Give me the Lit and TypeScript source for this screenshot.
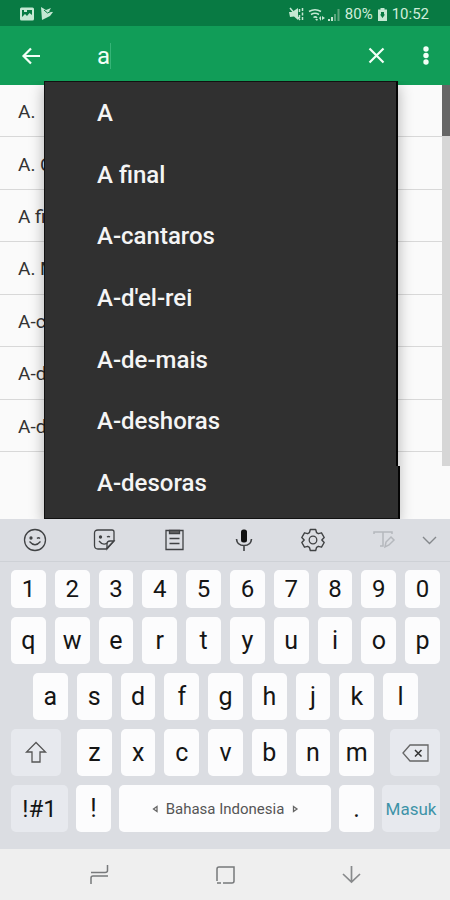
import { LitElement, html, css, svg } from "lit";
import { customElement, property, state } from "lit/decorators.js";

const suggestions = ["A", "A final", "A-cantaros", "A-d'el-rei", "A-de-mais", "A-deshoras", "A-desoras"];
const entries = ["A.", "A. C.", "A final", "A. M.", "A-cantaros", "A-d'el-rei", "A-de-mais"];

const glyphs: Record<string, unknown> = {
  picture: svg`<path d="M1.500 .5h11q1.500 0 1.500 1.500v10q0 1.500-1.500 1.500h-11q-1.500 0-1.500-1.500v-10q0-1.500 1.500-1.500z" fill="#c5e8d3"/><path d="M2 3h10v5l-2.500-2-2.500 3-2-2-3 3z" fill="#087a43"/><path d="M4 3h3v2H4z" fill="#c5e8d3"/>`,
  play: svg`<path d="M0 0l5 3 5-2-2 3.500 4 .5-3 4-8 4z" fill="#c5e8d3"/><path d="M3 3l3.500 3L11 4" fill="none" stroke="#087a43" stroke-width="1"/>`,
  mute: svg`<path d="M0 5h3l6-4v12L5 9.500 1 10z" fill="#c5e8d3"/><path d="M1 1l10 12M10.500 2v3M10.500 8v3M13.500 1v3M13.500 5.500v3M13.500 10v3" stroke="#c5e8d3" stroke-width="1.500" fill="none"/>`,
  wifi: svg`<g fill="none" stroke="#c5e8d3" stroke-width="1.500"><path d="M0 3.500Q6 0 12 3.500M2 6.500Q6 4 10 6.500M4.500 9.500Q6.500 8 8 10"/></g><path d="M6 11l2 2 1-2zM10 10l2-2v5zM13 8l3 2-3 2z" fill="#c5e8d3"/>`,
  signal: svg`<path d="M0 11h2v2H0zM3 9h2v4H3z" fill="#c5e8d3"/><path d="M6 6h2v7H6zM9.500 1h2v12h-2z" fill="#5ca57d"/>`,
  battery: svg`<path d="M2.500 0h4v1.500H9V13H0V1.500h2.500z" fill="#c5e8d3"/><path d="M3 4h3v2.500h1L4.500 10 2 6.500h1z" fill="#087a43"/>`,
  back: svg`<path d="M18 9H2M9 1.500L1.500 9 9 16.500" fill="none" stroke="#f2fff6" stroke-width="2.200"/>`,
  close: svg`<path d="M1.500 1.500l14 14M15.500 1.500l-14 14" stroke="#f2fff6" stroke-width="2.200"/>`,
  more: svg`<circle cx="3" cy="3" r="2.700" fill="#f2fff6"/><circle cx="3" cy="9.500" r="2.700" fill="#f2fff6"/><circle cx="3" cy="16" r="2.700" fill="#f2fff6"/>`,
  smile: svg`<circle cx="12" cy="12" r="10.500"/><path d="M6.500 13.500q5.500 6.500 11 0M14 10.500q1.500-1.500 3 0"/><circle cx="8" cy="10" r="1" fill="#333"/>`,
  sticker: svg`<path d="M6 2h14q2 0 2 2v9l-8 8H6q-3.500 0-3.500-3.500V5Q2.500 2 6 2z"/><path d="M22 13h-4q-3 0-3 3v5zM7 13q4 5 8 2M15 9q1.500-1 3 0"/><circle cx="8.500" cy="9" r="1" fill="#333"/>`,
  clipboard: svg`<path d="M4 2.500h17v19H4z"/><path d="M7.500 2.500h10v3h-10z" fill="#666"/><path d="M7.500 10.500h10M7.500 15.500h10" stroke-width="1.600"/>`,
  mic: svg`<rect x="9" y="1.500" width="6" height="13" rx="2.500" fill="#111" stroke="none"/><path d="M4.500 11q.5 6.500 7.500 6.500t7.500-6.500M12 17.500V23" stroke-width="1.600"/>`,
  gear: svg`<path d="M9.300 1.500h5.400l.9 3.200 1.700 1 3.200-.9 2.700 4.700-2.400 2.500 2.400 2.500-2.700 4.700-3.200-.9-1.700 1-.9 3.200H9.300l-.9-3.200-1.700-1-3.200.9L.8 14.500 3.200 12 .8 9.500l2.700-4.700 3.200.9 1.700-1z" stroke-linejoin="round" stroke-width="1.400"/><circle cx="12" cy="12" r="3.800"/>`,
  handwriting: svg`<g stroke="#b5b8bd" stroke-width="1.500"><path d="M3 6V4h18v2M12 4v14H9"/><path d="M14 19l1-5 5-5 3 3-5 5z"/></g>`,
  chevron: svg`<path d="M1 1l6.500 6.500L14 1" stroke="#85888c" stroke-width="1.400"/>`,
  shift: svg`<path d="M11 1.500L1.500 11H7v10h8V11h5.500z" stroke="#555" stroke-width="1.300"/>`,
  erase: svg`<path d="M1 9l7-8h18v16H8z" stroke="#666"/><path d="M13 6l6.500 6.500M19.500 6L13 12.500" stroke="#333" stroke-width="1.500"/>`,
  recents: svg`<path d="M1 19v-6q0-2 2-2h15M1 7.500h14q2.500 0 2.500-2V0" stroke="#77797b" stroke-width="1.500"/>`,
  home: svg`<path d="M1 15V3q0-2 2-2h15v14q0 2-2 2H7M5 17H1" stroke="#77797b" stroke-width="1.500"/>`,
  down: svg`<path d="M9.500 0v16M1 8l8.500 8L18 8" stroke="#888a8c" stroke-width="1.700"/>`,
  left: svg`<path d="M5 1.500L1.500 4 5 6.500z" stroke="#666"/>`,
  right: svg`<path d="M1.500 1.500L5 4 1.500 6.500z" stroke="#666"/>`,
};

@customElement("line-icon")
export class LineIcon extends LitElement {
  @property() name = "";
  @property({ type: Number }) w = 24;
  @property({ type: Number }) h = 24;
  static styles = css`
    :host { display: inline-flex; flex: none; }
    svg { display: block; fill: none; stroke: none; overflow: visible; }
    .lined { stroke: #404244; stroke-width: 1.300; }
  `;
  render() {
    const solid = ["picture", "play", "mute", "wifi", "signal", "battery", "back", "close", "more"].includes(this.name);
    return html`<svg class=${solid ? "" : "lined"} width=${this.w} height=${this.h} viewBox="0 0 ${this.w} ${this.h}" aria-hidden="true">${glyphs[this.name]}</svg>`;
  }
}

@customElement("soft-keyboard")
export class SoftKeyboard extends LitElement {
  static styles = css`
    :host { display: block; background: #dbdde2; font-family: Roboto, sans-serif; padding-bottom: 17px; }
    button { border: 0; margin: 0; padding: 0; font: inherit; color: #151515; background: none; display: flex; align-items: center; justify-content: center; min-width: 0; }
    .tools { display: grid; grid-template-columns: repeat(5, 1fr) 1fr 24px; height: 43px; box-sizing: border-box; border-bottom: 1px solid #ced1d6; padding-right: 8px; }
    .rows { display: flex; flex-direction: column; gap: 9px; padding: 8px 10px 0 11px; }
    .row { display: flex; gap: 9px; height: 47px; font-size: 25px; }
    .numbers { height: 38px; font-size: 24px; }
    .inset { padding: 0 22px; }
    .key { flex: 1; background: #fcfcfd; border-radius: 5px; }
    .third { display: grid; grid-template-columns: 50px 1fr 50px; gap: 16px; }
    .group { display: flex; gap: 9px; }
    .last { display: grid; grid-template-columns: 57px 35px 1fr 35px 58px; column-gap: 8px; }
    .special { background: #e7e9ee; }
    .symbols { font-size: 24px; }
    .space { font-size: 15px; color: #555; gap: 8px; }
    .enter { font-size: 17px; color: #3e93a8; }
  `;
  keys(text: string) {
    return [...text].map((k) => html`<button class="key">${k}</button>`);
  }
  render() {
    const tools = [["smile", "Emoji"], ["sticker", "Stiker"], ["clipboard", "Papan klip"], ["mic", "Suara"], ["gear", "Pengaturan"], ["handwriting", "Tulisan tangan"]];
    return html`
      <div class="tools">
        ${tools.map(([n, l]) => html`<button aria-label=${l}><line-icon name=${n}></line-icon></button>`)}
        <button aria-label="Tutup"><line-icon name="chevron" w="15" h="9"></line-icon></button>
      </div>
      <div class="rows">
        <div class="row numbers">${this.keys("1234567890")}</div>
        <div class="row">${this.keys("qwertyuiop")}</div>
        <div class="row inset">${this.keys("asdfghjkl")}</div>
        <div class="row third">
          <button class="key special" aria-label="Shift"><line-icon name="shift" w="22" h="23"></line-icon></button>
          <div class="group">${this.keys("zxcvbnm")}</div>
          <button class="key special" aria-label="Hapus"><line-icon name="erase" w="27" h="18"></line-icon></button>
        </div>
        <div class="row last">
          <button class="key special symbols">!#1</button>
          <button class="key">!</button>
          <button class="key space"><line-icon name="left" w="6" h="8"></line-icon>Bahasa Indonesia<line-icon name="right" w="6" h="8"></line-icon></button>
          <button class="key">.</button>
          <button class="key special enter">Masuk</button>
        </div>
      </div>`;
  }
}

@customElement("app-root")
export class AppRoot extends LitElement {
  @state() query = "a";
  static styles = css`
    :host { display: flex; flex-direction: column; min-height: 100vh; background: #fafafa; font-family: Roboto, sans-serif; }
    button { border: 0; margin: 0; padding: 0; background: none; font: inherit; color: inherit; }
    .status { height: 26px; box-sizing: border-box; padding: 2px 21px 0 20px; background: #087a43; color: #d0edda; display: flex; align-items: center; justify-content: space-between; font-size: 15px; }
    .notices { display: flex; gap: 7px; }
    .device { display: flex; align-items: center; gap: 5px; }
    .radio { display: flex; gap: 3px; }
    .bar { height: 59px; box-sizing: border-box; padding: 0 21px 0 22px; background: #119d58; display: flex; align-items: center; }
    .icon { display: flex; flex: none; }
    .search { flex: 1; display: flex; align-items: center; padding-left: 56px; min-width: 0; }
    .field { border: 0; padding: 0; outline: 0; background: none; color: #f2fff6; font: 400 24px/26px Roboto, sans-serif; field-sizing: content; min-width: 0; }
    .caret { width: 1px; height: 26px; background: #35b477; }
    .actions { display: flex; align-items: center; gap: 38px; }
    .body { flex: 1; position: relative; display: flex; min-height: 434px; }
    .list { flex: 1; margin: 0; padding: 0 0 67px; list-style: none; display: grid; grid-auto-rows: 1fr; }
    .entry { display: flex; align-items: center; padding: 2px 18px 0; border-bottom: 1px solid #d8d8d8; font-size: 19px; color: #333; }
    .track { position: absolute; top: 0; right: 0; bottom: 53px; width: 8px; background: #d6d6d6; }
    .thumb { height: 51px; background: #666; }
    .menu { position: absolute; left: 44px; right: 52px; top: -4px; bottom: 0; box-sizing: border-box; margin: 0; padding: 0 0 4px; list-style: none; display: flex; flex-direction: column; background: #303030; border: 1px solid #111; border-right: 2px solid #050505; box-shadow: 0 5px 14px rgba(0, 0, 0, 0.3); clip-path: inset(0 -20px 0 -20px); }
    .menu::after { content: ""; position: absolute; right: -4px; bottom: -1px; width: 4px; height: 53px; box-sizing: border-box; background: #303030; border-right: 2px solid #050505; border-bottom: 1px solid #111; }
    .option { flex: 1; display: flex; }
    .pick { flex: 1; padding-left: 52px; text-align: left; font-size: 24px; font-weight: 500; color: #f5f5f5; }
    .nav { height: 51px; background: #efefef; display: flex; justify-content: space-between; align-items: center; padding: 0 89px 0 90px; }
  `;
  render() {
    return html`
      <div class="status">
        <div class="notices">
          <line-icon name="picture" w="14" h="14"></line-icon>
          <line-icon name="play" w="12" h="13"></line-icon>
        </div>
        <div class="device">
          <line-icon name="mute" w="15" h="14"></line-icon>
          <span class="radio"><line-icon name="wifi" w="16" h="13"></line-icon><line-icon name="signal" w="12" h="13"></line-icon></span>
          <span>80%</span>
          <line-icon name="battery" w="9" h="13"></line-icon>
          <span>10:52</span>
        </div>
      </div>
      <header class="bar">
        <button class="icon" aria-label="Back"><line-icon name="back" w="19" h="18"></line-icon></button>
        <div class="search">
          <input class="field" aria-label="Search" .value=${this.query} @input=${(e: Event) => (this.query = (e.target as HTMLInputElement).value)} />
          <span class="caret"></span>
        </div>
        <div class="actions">
          <button class="icon" aria-label="Clear" @click=${() => (this.query = "")}><line-icon name="close" w="17" h="17"></line-icon></button>
          <button class="icon" aria-label="More options"><line-icon name="more" w="6" h="19"></line-icon></button>
        </div>
      </header>
      <main class="body">
        <ul class="list">${entries.map((e) => html`<li class="entry">${e}</li>`)}</ul>
        <div class="track"><div class="thumb"></div></div>
        <ul class="menu">${suggestions.map((s) => html`<li class="option"><button class="pick" @click=${() => (this.query = s)}>${s}</button></li>`)}</ul>
      </main>
      <soft-keyboard></soft-keyboard>
      <nav class="nav">
        <button class="icon" aria-label="Recents"><line-icon name="recents" w="19" h="19"></line-icon></button>
        <button class="icon" aria-label="Home"><line-icon name="home" w="19" h="18"></line-icon></button>
        <button class="icon" aria-label="Hide keyboard"><line-icon name="down" w="19" h="17"></line-icon></button>
      </nav>`;
  }
}
